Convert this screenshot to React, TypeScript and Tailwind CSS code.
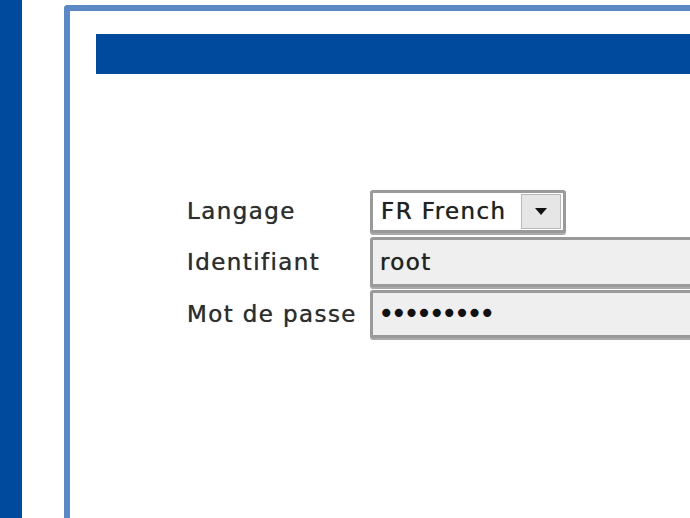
export default function App() {
  const font = { fontFamily: '"DejaVu Sans", Verdana, sans-serif' };
  const lbl = "w-[183px] shrink-0 text-[23px] tracking-[1.4px] text-[#2e2e2e] [text-shadow:0_0_0.7px_#555]";
  return (
    <div className="w-[690px] h-[518px] overflow-hidden bg-white flex" style={font}>
      <div className="w-[22px] shrink-0 bg-[#004a9e]" />
      <div className="ml-[42px] mt-[5px] flex-1 min-w-0 border-l-[6px] border-t-[6px] border-[#5b89c3] rounded-tl-[4px] pl-[26px] pt-[23px]">
        <div className="h-[40px] bg-[#004a9e] w-[700px]" />
        <div className="mt-[116px] pl-[91px] flex flex-col">
          <div className="flex items-center h-[43px]">
            <div className={lbl}>Langage</div>
            <div className="w-[196px] shrink-0 h-[43px] border-[3px] border-[#9a9a9a] rounded-[3px] bg-white flex items-center shadow-[0_2px_0_#aaa]">
              <span className="flex-1 pl-[8px] text-[23px] tracking-[1.4px] text-[#222] [text-shadow:0_0_0.7px_#444]">FR French</span>
              <div className="w-[40px] h-[35px] mr-[2px] bg-[#e6e6e6] border border-[#b8b8b8] flex items-center justify-center">
                <svg width="14" height="9" viewBox="0 0 14 9"><path d="M1 1h12L7 8z" fill="#111" /></svg>
              </div>
            </div>
          </div>
          <div className="flex items-center h-[50px] mt-[4px]">
            <div className={lbl}>Identifiant</div>
            <div className="w-[400px] shrink-0 h-[50px] border-[3px] border-[#9a9a9a] rounded-[3px] bg-[#efefef] flex items-center shadow-[0_2px_0_#aaa]">
              <span className="pl-[7px] text-[23px] tracking-[1.4px] text-[#222] [text-shadow:0_0_0.7px_#444]">root</span>
            </div>
          </div>
          <div className="flex items-center h-[48px] mt-[3px]">
            <div className={lbl}>Mot de passe</div>
            <div className="w-[400px] shrink-0 h-[48px] border-[3px] border-[#9a9a9a] rounded-[3px] bg-[#efefef] flex items-center shadow-[0_2px_0_#aaa]">
              <span className="pl-[5px] text-[28px] tracking-[-3.9px] text-[#111]">•••••••••</span>
            </div>
          </div>
        </div>
      </div>
    </div>
  );
}
